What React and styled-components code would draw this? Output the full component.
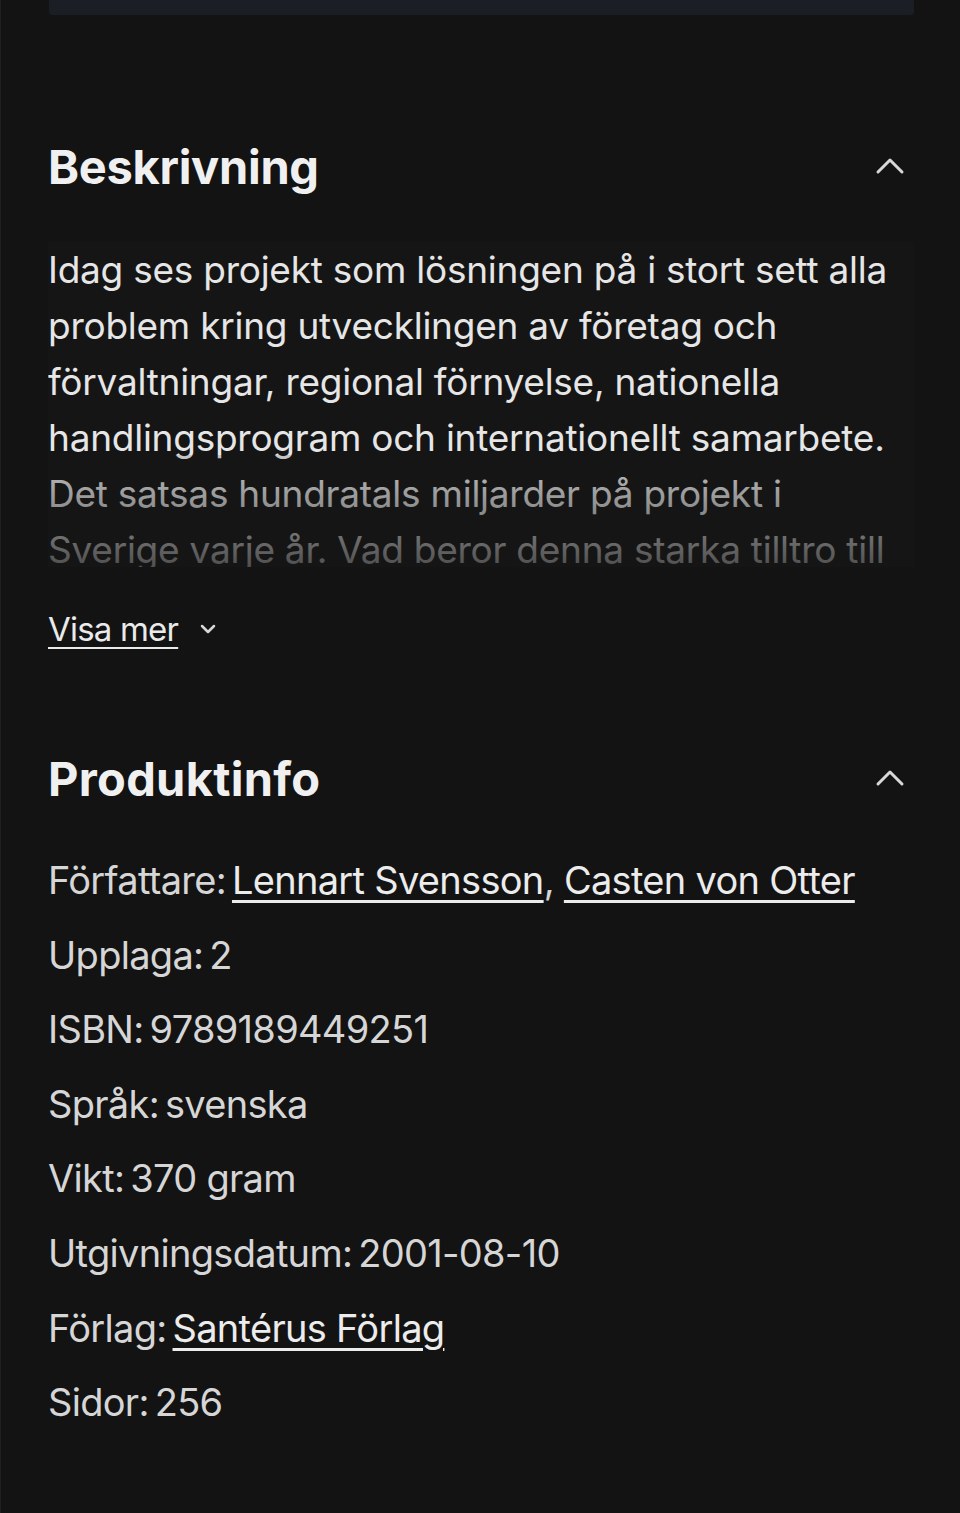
import React from 'react';
import styled, { createGlobalStyle } from 'styled-components';

const Global = createGlobalStyle`
  html, body {
    margin: 0;
    padding: 0;
    background: #131313;
  }
`;

const Page = styled.div`
  min-height: 1513px;
  box-sizing: border-box;
  padding: 0 46px 0 47px;
  background: #131313;
  border-left: 1px solid #1f1f1f;
  font-family: 'Inter', 'Noto Sans', sans-serif;
  color: #e4e4e4;
`;

const TopCard = styled.div`
  height: 15px;
  margin-left: 1px;
  background: #1b1f25;
  border-radius: 0 0 4px 4px;
`;

const Section = styled.section`
  padding-top: ${props => props.top}px;
`;

const SectionHeader = styled.div`
  display: flex;
  align-items: center;
  justify-content: space-between;
  height: 60px;
`;

const Heading = styled.h2`
  margin: 0;
  font-size: 47px;
  font-weight: 700;
  letter-spacing: ${props => props.spacing}px;
  color: #f0f0f0;
`;

const Toggle = styled.svg`
  width: 32px;
  height: 32px;
  margin-right: 8px;
  stroke: #d8d8d8;
  fill: none;
  stroke-width: 3;
  stroke-linecap: round;
  stroke-linejoin: round;
`;

const Description = styled.div`
  position: relative;
  margin-top: 46px;
  max-height: 325px;
  overflow: hidden;
  background: #151515;
`;

const Text = styled.p`
  margin: 0;
  font-size: 37px;
  line-height: 56px;
  letter-spacing: -0.25px;
  color: #e6e6e6;
`;

const Fade = styled.div`
  position: absolute;
  left: 0;
  right: 0;
  bottom: 0;
  height: 112px;
  background: linear-gradient(
    to bottom,
    rgba(21, 21, 21, 0.15) 0%,
    rgba(21, 21, 21, 0.72) 100%
  );
`;

const MoreButton = styled.button`
  display: flex;
  align-items: center;
  gap: 18px;
  margin-top: 42px;
  padding: 0;
  border: 0;
  background: none;
  font-family: inherit;
  font-size: 33px;
  letter-spacing: -0.8px;
  color: #eaeaea;
  cursor: pointer;

  span {
    text-decoration: underline;
    text-decoration-thickness: 2px;
    text-underline-offset: 6px;
  }
`;

const SmallChevron = styled.svg`
  width: 24px;
  height: 24px;
  stroke: #d8d8d8;
  fill: none;
  stroke-width: 2.5;
  stroke-linecap: round;
  stroke-linejoin: round;
`;

const InfoList = styled.dl`
  margin: 35px 0 0;
  display: flex;
  flex-direction: column;
`;

const InfoRow = styled.div`
  display: flex;
  align-items: baseline;
  height: 74.6px;
  font-size: 38px;
  line-height: 74px;
  letter-spacing: -0.7px;
  color: #d6d6d6;
`;

const Label = styled.dt`
  margin: 0 6px 0 0;
`;

const Value = styled.dd`
  margin: 0;
`;

const Link = styled.a`
  color: #ececec;
  text-decoration: underline;
  text-decoration-thickness: 3px;
  text-underline-offset: 6px;
`;

const ChevronUp = () => (
  <Toggle viewBox="0 0 32 32">
    <path d="M4 22 L16 10 L28 22" />
  </Toggle>
);

const info = [
  { label: 'Författare:', links: ['Lennart Svensson', 'Casten von Otter'] },
  { label: 'Upplaga:', value: '2' },
  { label: 'ISBN:', value: '9789189449251' },
  { label: 'Språk:', value: 'svenska' },
  { label: 'Vikt:', value: '370 gram' },
  { label: 'Utgivningsdatum:', value: '2001-08-10' },
  { label: 'Förlag:', links: ['Santérus Förlag'] },
  { label: 'Sidor:', value: '256' },
];

const App = () => (
  <Page>
    <Global />
    <TopCard />

    <Section top={121}>
      <SectionHeader>
        <Heading spacing={-0.3}>Beskrivning</Heading>
        <ChevronUp />
      </SectionHeader>
      <Description>
        <Text>
          Idag ses projekt som lösningen på i stort sett alla problem kring
          utvecklingen av företag och förvaltningar, regional förnyelse,
          nationella handlingsprogram och internationellt samarbete. Det satsas
          hundratals miljarder på projekt i Sverige varje år. Vad beror denna
          starka tilltro till
        </Text>
        <Fade />
      </Description>
      <MoreButton>
        <span>Visa mer</span>
        <SmallChevron viewBox="0 0 24 24">
          <path d="M6 9 L12 15 L18 9" />
        </SmallChevron>
      </MoreButton>
    </Section>

    <Section top={99}>
      <SectionHeader>
        <Heading spacing={0.3}>Produktinfo</Heading>
        <ChevronUp />
      </SectionHeader>
      <InfoList>
        {info.map(row => (
          <InfoRow key={row.label}>
            <Label>{row.label}</Label>
            <Value>
              {row.links
                ? row.links.map((name, i) => (
                    <React.Fragment key={name}>
                      {i > 0 && ', '}
                      <Link href="#">{name}</Link>
                    </React.Fragment>
                  ))
                : row.value}
            </Value>
          </InfoRow>
        ))}
      </InfoList>
    </Section>
  </Page>
);

export default App;
